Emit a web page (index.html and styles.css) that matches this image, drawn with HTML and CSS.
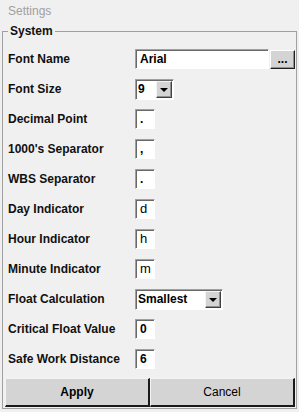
FILE: index.html
```html
<!DOCTYPE html>
<html>
<head>
<meta charset="utf-8">
<link rel="stylesheet" href="styles.css">
</head>
<body>
<div class="title">Settings</div>
<fieldset class="group">
  <legend class="legend">System</legend>
  <div class="rows">
    <div class="row"><span class="label">Font Name</span><span class="field wide">Arial</span><span class="dots">...</span></div>
    <div class="row"><span class="label">Font Size</span><span class="select sel-size"><span class="sel-text">9</span><span class="arrow"><span class="tri"></span></span></span></div>
    <div class="row"><span class="label">Decimal Point</span><span class="field small">.</span></div>
    <div class="row"><span class="label">1000's Separator</span><span class="field small">,</span></div>
    <div class="row"><span class="label">WBS Separator</span><span class="field small">.</span></div>
    <div class="row"><span class="label">Day Indicator</span><span class="field small reg">d</span></div>
    <div class="row"><span class="label">Hour Indicator</span><span class="field small reg">h</span></div>
    <div class="row"><span class="label">Minute Indicator</span><span class="field small reg">m</span></div>
    <div class="row"><span class="label">Float Calculation</span><span class="select sel-float"><span class="sel-text">Smallest</span><span class="arrow"><span class="tri"></span></span></span></div>
    <div class="row"><span class="label">Critical Float Value</span><span class="field small">0</span></div>
    <div class="row"><span class="label">Safe Work Distance</span><span class="field small">6</span></div>
  </div>
  <div class="actions">
    <button class="btn primary">Apply</button>
    <button class="btn">Cancel</button>
  </div>
</fieldset>
</body>
</html>
```
FILE: styles.css
```css
html, body {
  margin: 0;
  padding: 0;
}
body {
  width: 299px;
  height: 412px;
  overflow: hidden;
  background: #f0f0f0;
  font-family: "Liberation Sans", Arial, sans-serif;
  font-size: 12px;
  color: #111;
}
.title {
  height: 24px;
  line-height: 23px;
  padding-left: 8px;
  color: #a0a0a0;
}
.group {
  margin: 0 2px;
  border: 1px solid #a0a0a0;
  padding: 6px 1px 1px 2px;
  min-width: 0;
}
.legend {
  margin-left: 3px;
  padding: 0 2px;
  font-weight: bold;
  line-height: 14px;
  color: #111;
}
.rows {
  display: flex;
  flex-direction: column;
}
.row {
  display: flex;
  align-items: center;
  height: 30px;
  padding-left: 3px;
}
.label {
  width: 127px;
  flex: none;
  font-weight: bold;
}
.field {
  box-sizing: border-box;
  height: 20px;
  background: #fff;
  border-top: 1px solid #a0a0a0;
  border-left: 1px solid #a0a0a0;
  border-right: 1px solid #fff;
  border-bottom: 1px solid #fff;
  box-shadow: inset 1px 1px 0 #696969;
  padding-left: 4px;
  line-height: 18px;
  font-weight: bold;
  color: #000;
}
.field.reg {
  font-weight: normal;
  font-size: 13px;
}
.small {
  width: 20px;
}
.wide {
  width: 134px;
}
.dots {
  box-sizing: border-box;
  margin-left: 1px;
  width: 25px;
  height: 19px;
  background: #d4d4d4;
  border-top: 1px solid #fff;
  border-left: 1px solid #fff;
  border-right: 1px solid #202020;
  border-bottom: 1px solid #202020;
  box-shadow: inset -1px -1px 0 #909090;
  font-weight: bold;
  font-size: 12px;
  line-height: 17px;
  text-align: center;
  color: #000;
}
.select {
  box-sizing: border-box;
  display: flex;
  align-items: center;
  height: 21px;
  background: #fff;
  border-top: 1px solid #a0a0a0;
  border-left: 1px solid #a0a0a0;
  border-right: 1px solid #fff;
  border-bottom: 1px solid #fff;
  box-shadow: inset 1px 1px 0 #696969;
  padding: 1px 1px 1px 2px;
}
.sel-size {
  width: 39px;
}
.sel-float {
  width: 88px;
}
.sel-text {
  flex: 1;
  font-weight: bold;
  color: #000;
  line-height: 17px;
}
.arrow {
  box-sizing: border-box;
  width: 16px;
  height: 17px;
  background: #d4d4d4;
  border-top: 1px solid #f4f4f4;
  border-left: 1px solid #f4f4f4;
  border-right: 1px solid #404040;
  border-bottom: 1px solid #404040;
  box-shadow: inset -1px -1px 0 #909090;
  display: flex;
  align-items: center;
  justify-content: center;
}
.tri {
  width: 0;
  height: 0;
  border-left: 4px solid transparent;
  border-right: 4px solid transparent;
  border-top: 4px solid #000;
  margin-top: 1px;
}
.actions {
  display: flex;
  margin-top: 4px;
}
.btn {
  flex: 1;
  box-sizing: border-box;
  height: 29px;
  margin: 0;
  padding: 0;
  background: #d4d4d4;
  border-top: 1px solid #f4f4f4;
  border-left: 1px solid #f4f4f4;
  border-right: 2px solid #1a1a1a;
  border-bottom: 2px solid #1a1a1a;
  font-family: "Liberation Sans", Arial, sans-serif;
  font-size: 12px;
  color: #000;
}
.btn.primary {
  font-weight: bold;
}
```
